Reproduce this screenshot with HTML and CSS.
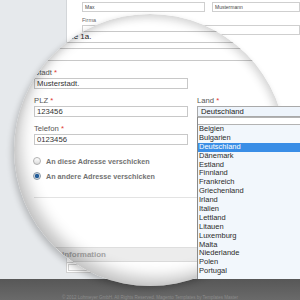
FILE: index.html
```html
<!DOCTYPE html>
<html lang="de">
<head>
    <meta charset="UTF-8">
    <meta name="viewport" content="width=device-width, initial-scale=1.0">
    <link rel="stylesheet" href="styles.css">
    <title>Lieferadresse</title>
</head>
<body>
    <div class="page">
        <div class="main">
            <div class="side"></div>
            <div class="panel">
                <div class="name-row">
                    <div class="s-input s-first">Max</div>
                    <div class="s-input s-last">Mustermann</div>
                </div>
                <div class="s-label">Firma</div>
                <div class="s-input"></div>
                <div class="s-box"></div>
            </div>
        </div>
        <div class="footer">&copy; 2012 Lohmeyer GmbH. All Rights Reserved. Magento Templates by Templates Master</div>

        <!-- magnifier lens over the form -->
        <div class="lens">
            <div class="lens-form">
                <div class="field wide">Musterstraße 1a.</div>
                <div class="field wide tall"></div>

                <div class="grid">
                    <div class="group">
                        <label>Stadt <em>*</em></label>
                        <div class="field">Musterstadt.</div>
                    </div>
                    <div></div>
                    <div class="group">
                        <label>PLZ <em>*</em></label>
                        <div class="field">123456</div>
                    </div>
                    <div class="group">
                        <label>Land <em>*</em></label>
                    </div>
                    <div class="group">
                        <label>Telefon <em>*</em></label>
                        <div class="field">0123456</div>
                    </div>
                </div>

                <div class="ship">
                    <div class="opt"><span class="radio"></span>An diese Adresse verschicken</div>
                    <div class="opt"><span class="radio checked"></span>An andere Adresse verschicken</div>
                </div>
                <div class="divider"></div>
                <div class="section-head">Information</div>
            </div>
        </div>

        <!-- open country select -->
        <div class="dropdown">
            <div class="select">Deutschland</div>
            <ul class="options">
                <li class="blank"></li>
                <li>Belgien</li>
                <li>Bulgarien</li>
                <li class="sel">Deutschland</li>
                <li>Dänemark</li>
                <li>Estland</li>
                <li>Finnland</li>
                <li>Frankreich</li>
                <li>Griechenland</li>
                <li>Irland</li>
                <li>Italien</li>
                <li>Lettland</li>
                <li>Litauen</li>
                <li>Luxemburg</li>
                <li>Malta</li>
                <li>Niederlande</li>
                <li>Polen</li>
                <li>Portugal</li>
            </ul>
        </div>
    </div>
</body>
</html>
```

FILE: styles.css
```css
/* Basic reset */
* {
    margin: 0;
    padding: 0;
    box-sizing: border-box;
}
body {
    font-family: "Liberation Sans", Arial, sans-serif;
    background-color: #e6e9ec;
}
.page {
    position: relative;
    width: 300px;
    height: 300px;
    overflow: hidden;
    display: flex;
    flex-direction: column;
}

/* page behind the lens */
.main {
    height: 279px;
    display: flex;
    padding-bottom: 6px;
}
.side {
    width: 66px;
}
.panel {
    flex: 1;
    background-color: #fff;
    border-left: 1px solid #d3d6d9;
    display: flex;
    flex-direction: column;
    padding: 2px 0 0 15px;
}
.name-row {
    display: flex;
    gap: 7px;
}
.s-input {
    height: 10px;
    border: 1px solid #cfcfcf;
    font-size: 5px;
    line-height: 8px;
    padding: 0 2px;
    color: #444;
}
.s-first {
    width: 123px;
}
.s-last {
    flex: 1;
}
.s-label {
    margin-top: 4px;
    font-size: 5.5px;
    line-height: 9px;
    color: #666;
}
.s-box {
    margin-top: auto;
    margin-left: -16px;
    height: 11px;
    border: 3px double #d2d2d2;
}
.footer {
    height: 21px;
    background: linear-gradient(#575757, #6a6a6a);
    color: #8c8c8c;
    font-size: 4.5px;
    text-align: center;
    padding-top: 16px;
}

/* lens */
.lens {
    position: absolute;
    left: 14px;
    top: 14px;
    width: 272px;
    height: 272px;
    border-radius: 50%;
    overflow: hidden;
    background-color: #fff;
    box-shadow: -2px 3px 6px rgba(0, 0, 0, 0.22);
    z-index: 1;
}
.lens::after {
    content: "";
    position: absolute;
    top: 0;
    left: 0;
    right: 0;
    bottom: 0;
    border-radius: 50%;
    box-shadow: inset 6px -8px 15px rgba(0, 0, 0, 0.24), inset -3px 4px 8px rgba(0, 0, 0, 0.14);
    pointer-events: none;
}
.lens-form {
    width: 300px;
    padding: 17px 0 0 20px;
}
.field {
    height: 11px;
    border: 1px solid #c8c8c8;
    font-size: 7.7px;
    line-height: 9px;
    padding: 0 2px;
    color: #333;
}
.field.wide {
    width: 262px;
    height: 12px;
    line-height: 10px;
    font-size: 8px;
    color: #1e1e1e;
    margin-left: -6px;
}
.field.tall {
    height: 13px;
    margin-top: 5px;
}
.grid {
    display: grid;
    grid-template-columns: 154px 1fr;
    column-gap: 9px;
    row-gap: 7px;
    margin-top: 7px;
}
.group label {
    display: block;
    font-size: 7.7px;
    line-height: 9px;
    color: #555;
    margin-bottom: 1px;
}
.group em {
    font-style: normal;
    color: #e0372f;
}
.ship {
    margin-top: 11px;
    display: flex;
    flex-direction: column;
    gap: 5px;
}
.opt {
    display: flex;
    align-items: center;
    gap: 5px;
    height: 10px;
    font-size: 7.2px;
    font-weight: bold;
    color: #727272;
}
.radio {
    width: 8px;
    height: 8px;
    margin-left: -1px;
    border-radius: 50%;
    border: 1px solid #b0b0b0;
    background: linear-gradient(#fff, #dcdcdc);
}
.radio.checked {
    border-color: #8b9aa8;
    background: radial-gradient(circle, #245f9c 0 1.9px, #d3dbe3 2.4px);
}
.divider {
    margin-top: 16px;
    width: 163px;
    border-top: 1px solid #e3e3e3;
}
.section-head {
    margin: 49px 0 0 -20px;
    width: 260px;
    height: 15px;
    background-color: #ececec;
    border-top: 1px solid #dedede;
    border-bottom: 1px solid #dadada;
    font-size: 8px;
    font-weight: bold;
    line-height: 13px;
    color: #a6a6a6;
    padding-left: 48px;
}

/* opened select list */
.dropdown {
    position: absolute;
    left: 197px;
    top: 106px;
    right: -4px;
    bottom: 21px;
    z-index: 2;
    overflow: hidden;
    display: flex;
    flex-direction: column;
}
.select {
    height: 11px;
    border: 1px solid #a9a9a9;
    background-color: #eef4fb;
    font-size: 7.7px;
    line-height: 9px;
    padding-left: 3px;
    color: #222;
}
.options {
    flex: 1;
    list-style: none;
    border-left: 1px solid #8a8a8a;
    background-color: #f2f7fc;
    overflow: hidden;
}
.options li {
    height: 8.9px;
    line-height: 8.9px;
    font-size: 7.5px;
    color: #2b2b2b;
    padding-left: 1px;
}
.options li.blank {
    height: 8px;
    border: 1px solid #b3b3b3;
    border-left: none;
    background-color: #fff;
}
.options li.sel {
    background-color: #3a8ee6;
    color: #fff;
}
```
